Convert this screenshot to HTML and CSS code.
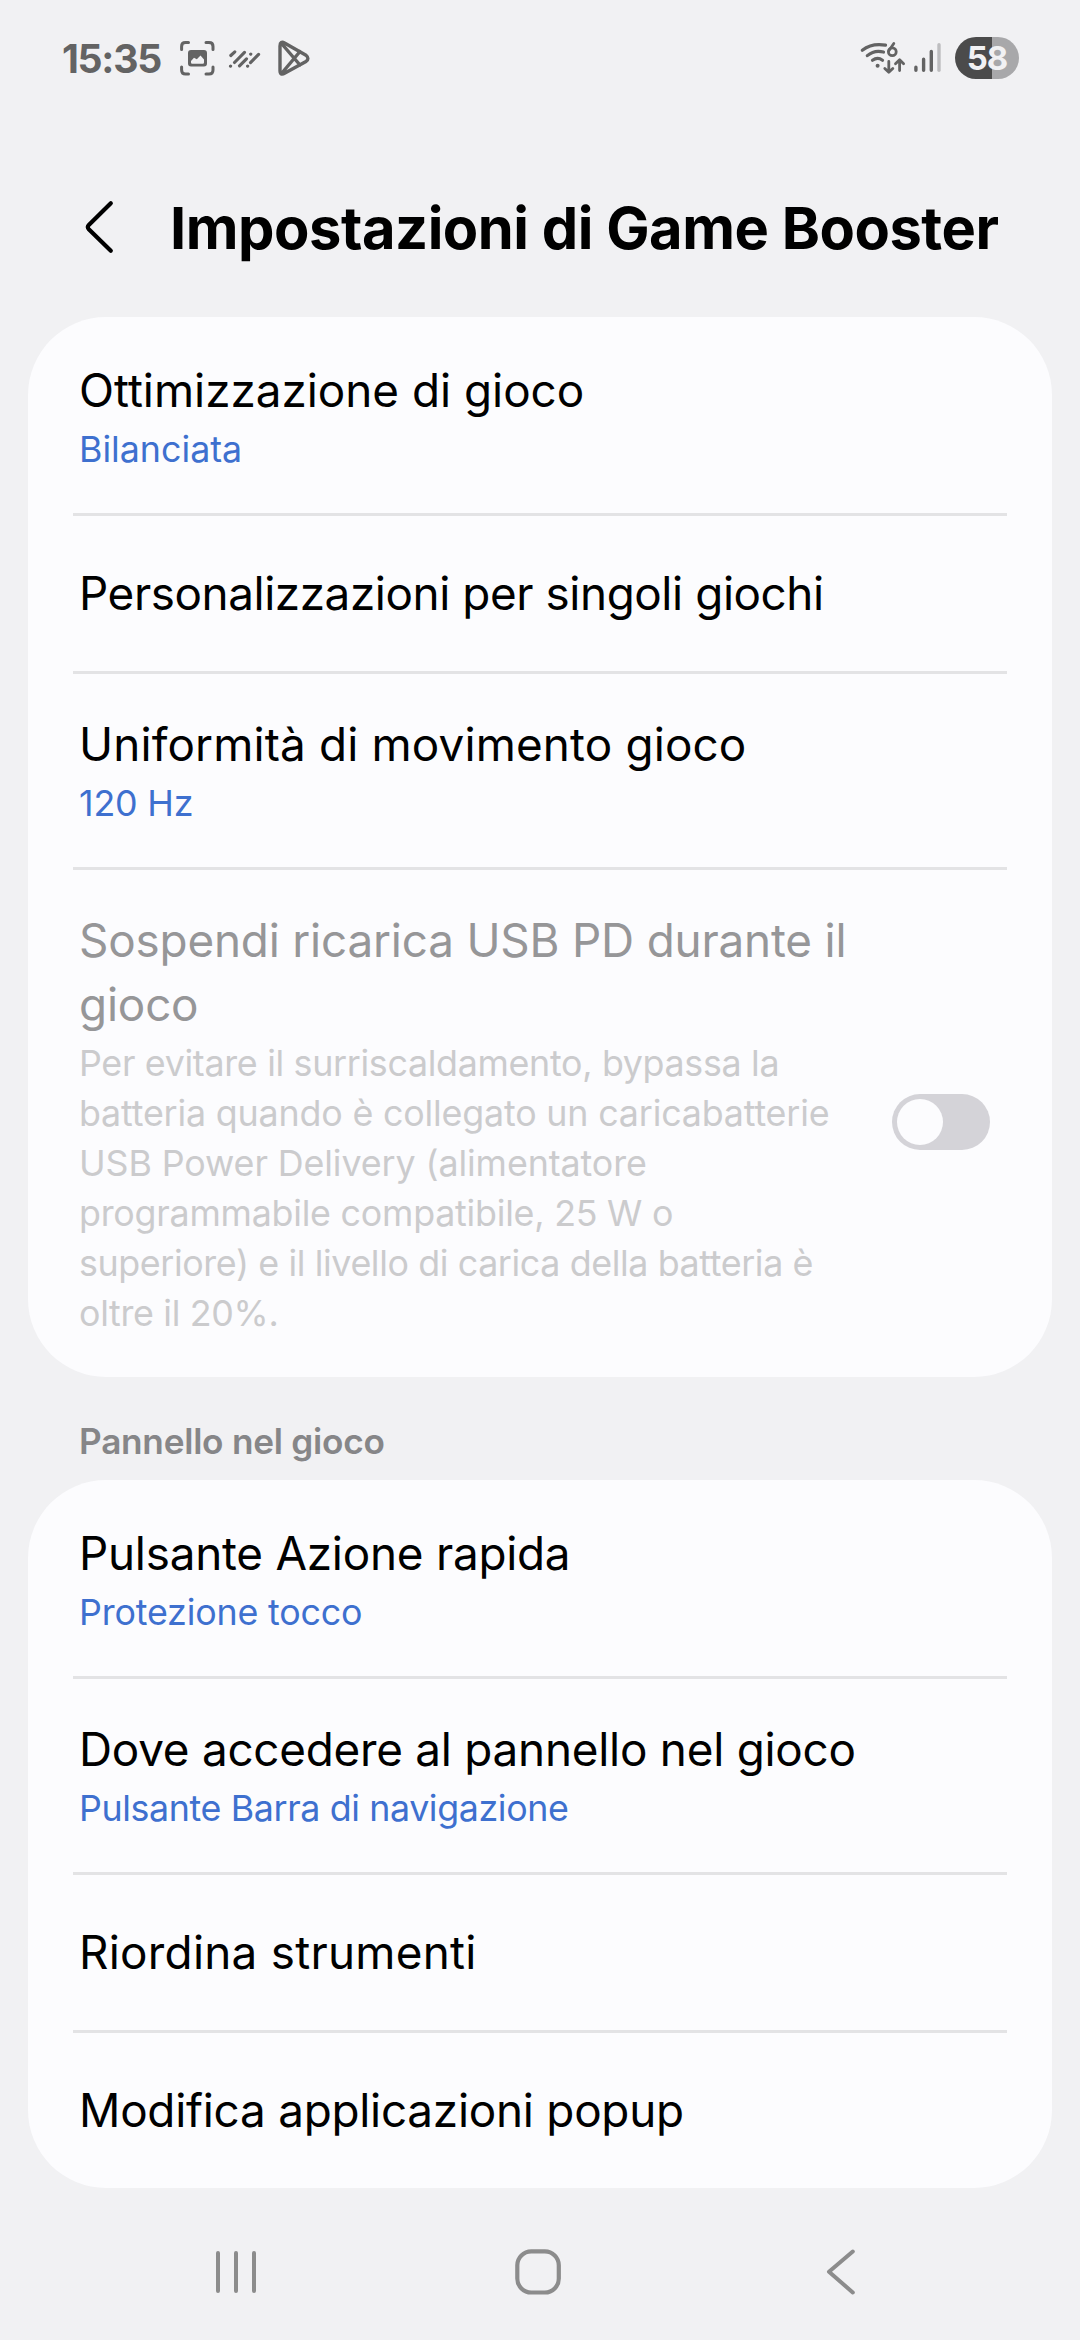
FILE: index.html
```html
<!DOCTYPE html>
<html lang="it">
<head>
<meta charset="utf-8">
<title>Impostazioni di Game Booster</title>
<link rel="stylesheet" href="styles.css">
</head>
<body>
<div class="screen">
  <header class="status-bar">
    <span class="clock">15:35</span>
    <svg class="status-icons" width="134" height="40" viewBox="178 38 134 40" fill="none" stroke="#636363" stroke-width="3" stroke-linecap="round" stroke-linejoin="round">
      <path d="M181.6 49.5V46.5Q181.6 42.6 185.5 42.6H188.5M206 42.6H209Q213 42.6 213 46.5V49.5M213 67V70Q213 74 209 74H206M188.5 74H185.5Q181.6 74 181.6 70V67"/>
      <path fill="#636363" fill-rule="evenodd" stroke="none" d="M191 50H204Q207 50 207 53V63.500Q207 66.500 204 66.500H191Q188 66.500 188 63.500V53Q188 50 191 50ZM191 62.500Q191 63.700 192.200 63.700H202.800Q204 63.700 204 62.500V59.500L200.500 55.500L196.800 59.200L194 57.800L191 61Z"/>
      <path stroke-width="3.100" d="M230.800 55.500L234.800 51.800M230.500 66.200L230.600 66.100M234.500 62.500L244.500 52.300M239.500 65.800L246.500 58.800M250.700 54.200L250.800 54.100M247.600 66.200L247.700 66.100M250.500 62.600L258.600 54.400"/>
      <path stroke-width="3.400" d="M280 46V70.500Q280 76 285 73L306 61.500Q309.800 58.500 306 55.300L285 43.200Q280 40.500 280 46ZM281.500 43.500L300 65M281.500 73.500L300 51.500"/>
    </svg>
    <svg class="signal" width="84" height="40" viewBox="858 38 84 40" fill="none" stroke="#636363" stroke-width="3.200" stroke-linecap="round" stroke-linejoin="round">
      <path d="M862.300 50.200Q872 42.800 885.500 45.200M867.300 55.600Q874.500 49.500 883.500 52M872.500 60.300Q877.500 56.500 882.500 60.200"/>
      <circle cx="877.600" cy="65.700" r="2" fill="#636363" stroke="none"/>
      <path stroke-width="2.800" d="M893.800 43.500L889 50.500"/>
      <circle cx="892.300" cy="51.800" r="3.900" stroke-width="2.800"/>
      <path stroke-width="2.800" d="M888.800 61.500V72M884.800 68.500L888.800 72.300L892.800 68.500M899.600 70.500V60.200M895.500 63.800L899.600 59.800L903.600 63.800"/>
      <path stroke-width="3.400" d="M915.900 67.200V70.300M923.600 59.200V70.300M931.300 51.400V70.300"/>
      <path stroke="#bdbdbf" stroke-width="3.400" d="M939 44.800V70.300"/>
    </svg>
    <span class="battery">58</span>
  </header>

  <div class="title-bar">
    <svg width="30" height="56" viewBox="84 199 30 56" fill="none" stroke="#000" stroke-width="4.200" stroke-linecap="round" stroke-linejoin="round"><path d="M110.800 203.200L88.800 225Q86.700 227 88.800 229.200L110.800 250.800"/></svg>
    <h1>Impostazioni di Game Booster</h1>
  </div>

  <main>
    <section class="card first">
      <div class="row">
        <p class="name">Ottimizzazione di gioco</p>
        <p class="value">Bilanciata</p>
      </div>
      <div class="row single"><p class="name t-41">Personalizzazioni per singoli giochi</p></div>
      <div class="row">
        <p class="name t16">Uniformità di movimento gioco</p>
        <p class="value t-17">120 Hz</p>
      </div>
      <div class="row with-switch">
        <div>
          <p class="name off t-17">Sospendi ricarica USB PD durante il<br>gioco</p>
          <p class="desc">
            <span class="t-31">Per evitare il surriscaldamento, bypassa la</span>
            <span class="t-17">batteria quando è collegato un caricabatterie</span>
            <span class="t-09">USB Power Delivery (alimentatore</span>
            <span class="t-23">programmabile compatibile, 25 W o</span>
            <span class="t-38">superiore) e il livello di carica della batteria è</span>
            <span class="t-31">oltre il 20%.</span>
          </p>
        </div>
        <span class="switch"></span>
      </div>
    </section>

    <h2>Pannello nel gioco</h2>

    <section class="card">
      <div class="row lead">
        <p class="name t-23">Pulsante Azione rapida</p>
        <p class="value t-17">Protezione tocco</p>
      </div>
      <div class="row">
        <p class="name t-23">Dove accedere al pannello nel gioco</p>
        <p class="value t-38">Pulsante Barra di navigazione</p>
      </div>
      <div class="row single"><p class="name t27">Riordina strumenti</p></div>
      <div class="row single"><p class="name t-23">Modifica applicazioni popup</p></div>
    </section>
  </main>

  <nav class="nav-bar">
    <svg width="44" height="50" viewBox="214 2247 44 50" fill="none" stroke="#8c8c8c" stroke-width="4" stroke-linecap="round"><path d="M218 2253V2291M236 2253V2291M254 2253V2291"/></svg>
    <svg class="home" width="50" height="50" viewBox="513 2247 50 50" fill="none" stroke="#8c8c8c" stroke-width="4.200"><rect x="517.300" y="2251.300" width="41.500" height="41.200" rx="14"/></svg>
    <svg width="32" height="50" viewBox="825 2247 32 50" fill="none" stroke="#8c8c8c" stroke-width="4" stroke-linecap="round" stroke-linejoin="round"><path d="M852.800 2251.500L829 2271.700L852.800 2292.500"/></svg>
  </nav>
</div>
</body>
</html>
```
FILE: styles.css
```css
* { box-sizing: border-box; }
body, h1, h2, p { margin: 0; }
body {
  background: #f1f1f3;
  font-family: Inter, Roboto, sans-serif;
  color: #000;
}
svg { display: block; flex: none; }
.screen {
  width: 1080px;
  height: 2340px;
  display: flex;
  flex-direction: column;
  overflow: hidden;
}

/* Status bar */
.status-bar {
  height: 116px;
  padding: 0 61px 0 62px;
  display: flex;
  align-items: center;
}
.clock {
  width: 116px;
  font-size: 39.2px;
  font-weight: 700;
  letter-spacing: -1.3px;
  color: #636363;
}
.signal { margin-left: auto; }
.battery {
  width: 64px;
  height: 42px;
  margin-left: 13px;
  border-radius: 21px;
  background: linear-gradient(90deg, #4b4b4b 37px, #a8a8aa 37px);
  color: #f1f1f3;
  font-size: 33px;
  font-weight: 700;
  line-height: 43px;
  letter-spacing: -1px;
  text-align: center;
}

/* Page title */
.title-bar {
  height: 201px;
  padding: 83px 0 0 84px;
  display: flex;
  align-items: flex-start;
  gap: 56px;
}
h1 {
  font-size: 57.8px;
  font-weight: 700;
  line-height: 58px;
  letter-spacing: -0.46px;
  white-space: nowrap;
}

/* Cards */
.card {
  margin: 0 28px;
  border-radius: 78px;
  background: #fcfcfe;
}
.first { padding-top: 3px; }
.row {
  margin: 0 45px;
  padding: 39px 6px;
  border-bottom: 3px solid #e3e3e5;
}
.lead { padding-top: 42px; }
.row:last-child { border-bottom: 0; }
.single { padding: 46px 6px 45px; }
.name {
  font-size: 45.8px;
  line-height: 64px;
  white-space: nowrap;
}
.value, .desc {
  margin-top: 1px;
  font-size: 35.8px;
  line-height: 50px;
  color: #3e70cf;
  white-space: nowrap;
}
.desc { color: #cbcbcd; }
.desc span { display: block; }
.off { color: #969698; }
.with-switch {
  display: flex;
  align-items: center;
  justify-content: space-between;
  padding-right: 17px;
}
.switch {
  width: 98px;
  height: 56px;
  margin-bottom: 3px;
  padding: 5px;
  border-radius: 28px;
  background: #d4d3d8;
}
.switch::before {
  content: "";
  display: block;
  width: 46px;
  height: 46px;
  border-radius: 50%;
  background: #fcfcfe;
}
h2 {
  height: 103px;
  padding: 39px 0 0 79px;
  font-size: 35.2px;
  font-weight: 600;
  line-height: 50px;
  letter-spacing: -0.25px;
  color: #868688;
}

/* Letter spacing */
.t27 { letter-spacing: 0.27px; }
.t16 { letter-spacing: 0.16px; }
.t-09 { letter-spacing: -0.09px; }
.t-17 { letter-spacing: -0.17px; }
.t-23 { letter-spacing: -0.23px; }
.t-31 { letter-spacing: -0.31px; }
.t-38 { letter-spacing: -0.38px; }
.t-41 { letter-spacing: -0.41px; }

/* Navigation bar */
.nav-bar {
  flex: 1;
  padding: 59px 223px 0 214px;
  display: flex;
  align-items: flex-start;
  justify-content: space-between;
}
.home { margin-right: 7px; }
```
